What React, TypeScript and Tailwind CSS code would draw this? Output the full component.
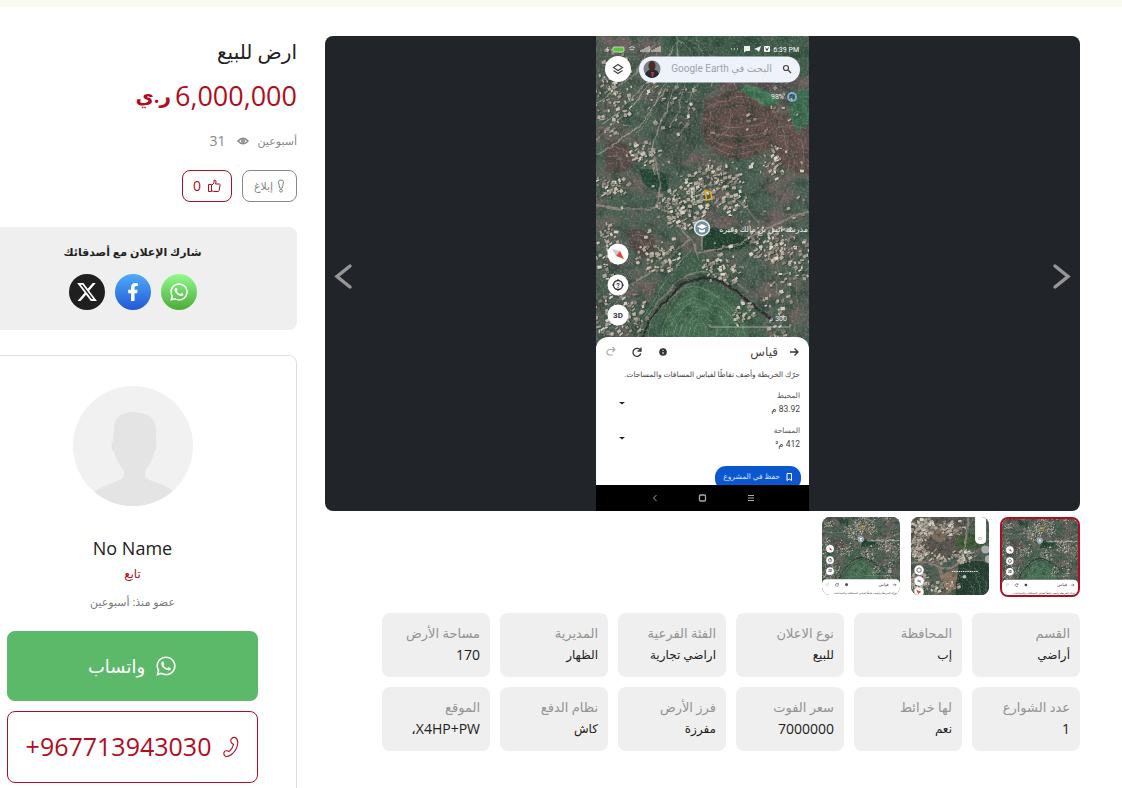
import React, { useId, useState } from 'react';
import { FaFacebookF, FaWhatsapp } from 'react-icons/fa';
import { FaXTwitter } from 'react-icons/fa6';

type Cluster = [x: number, y: number, rx: number, ry: number, count: number];

const VILLAGE: Cluster[] = [
  [16, 55, 19, 46, 100],
  [45, 116, 18, 13, 50],
  [118, 146, 32, 19, 110],
  [84, 172, 26, 22, 130],
  [135, 168, 20, 10, 34],
  [178, 127, 14, 20, 34],
  [172, 208, 24, 18, 85],
  [195, 224, 20, 26, 50],
  [126, 232, 22, 15, 60],
  [10, 214, 13, 28, 55],
  [62, 222, 24, 14, 64],
  [24, 278, 28, 24, 85],
  [145, 278, 14, 14, 30],
  [14, 150, 16, 12, 34],
  [72, 62, 26, 32, 34],
  [190, 60, 20, 30, 12],
  [180, 260, 16, 28, 26],
  [176, 300, 14, 14, 16],
  [106, 150, 106, 80, 90],
];

const TOWN: Cluster[] = [
  [30, 160, 36, 28, 110],
  [110, 160, 36, 26, 60],
  [20, 215, 24, 34, 80],
  [140, 235, 34, 18, 44],
  [70, 240, 34, 18, 24],
  [20, 310, 26, 32, 70],
  [90, 320, 44, 18, 24],
];

const TONES = ['#cbbfae', '#b8aba0', '#ddd3c4', '#8d847d', '#c7b7a6', '#a0938a', '#efe9de'];

const random = (seed: number) => () => {
  seed = (seed * 16807) % 2147483647;
  return seed / 2147483647;
};

const buildHouses = (clusters: Cluster[], seed: number, size: number) => {
  const rnd = random(seed);
  return clusters.flatMap(([cx, cy, rx, ry, count]) =>
    Array.from({ length: count }, () => {
      const a = rnd() * Math.PI * 2;
      const r = Math.pow(rnd(), 0.65);
      return {
        x: cx + Math.cos(a) * r * rx,
        y: cy + Math.sin(a) * r * ry,
        w: size * (0.5 + rnd() * 1.2),
        h: size * (0.4 + rnd() * 0.9),
        turn: -45 + rnd() * 50,
        fill: TONES[Math.floor(rnd() * TONES.length)],
      };
    })
  );
};

const houses = {
  village: buildHouses(VILLAGE, 4211, 2.8),
  town: buildHouses(TOWN, 977, 7),
};

const Terrain: React.FC<{ kind: 'village' | 'town' }> = ({ kind }) => {
  const id = useId();
  return (
    <g>
      <defs>
        <filter id={`${id}soil`} x="0" y="0" width="1" height="1" colorInterpolationFilters="sRGB">
          <feTurbulence type="fractalNoise" baseFrequency="0.03 0.045" numOctaves="5" seed="8" />
          <feColorMatrix values="0 0 0 0 0.42  0 0 0 0 0.37  0 0 0 0 0.36  3 0 0 0 -1.3" />
        </filter>
        <filter id={`${id}grain`} x="0" y="0" width="1" height="1" colorInterpolationFilters="sRGB">
          <feTurbulence type="fractalNoise" baseFrequency="0.45" numOctaves="2" seed="3" />
          <feColorMatrix values="0 0 0 0 0.7  0 0 0 0 0.72  0 0 0 0 0.66  2.4 0 0 0 -1.1" />
        </filter>
        <filter id={`${id}shade`} x="0" y="0" width="1" height="1" colorInterpolationFilters="sRGB">
          <feTurbulence type="fractalNoise" baseFrequency="0.08" numOctaves="4" seed="21" />
          <feColorMatrix values="0 0 0 0 0.1  0 0 0 0 0.19  0 0 0 0 0.15  3 0 0 0 -1.4" />
        </filter>
        <filter id={`${id}rough`} x="-0.1" y="-0.1" width="1.2" height="1.2" colorInterpolationFilters="sRGB">
          <feTurbulence type="fractalNoise" baseFrequency="0.04" numOctaves="3" seed="5" />
          <feDisplacementMap in="SourceGraphic" scale="9" xChannelSelector="R" yChannelSelector="G" />
        </filter>
      </defs>
      <rect width="213" height="475" fill="#485d50" />
      <rect width="213" height="475" filter={`url(#${id}soil)`} />
      {kind === 'village' ? (
        <g filter={`url(#${id}rough)`} fill="none">
          <path d="M70 0C100 -4 150 4 213 0V40C170 50 150 40 120 52C90 66 84 40 60 60Z" fill="#3b5a47" opacity=".8" />
          <path d="M60 60C90 44 110 60 104 100C100 124 84 130 70 120C60 100 58 80 60 60Z" fill="#435247" opacity=".8" />
          <path d="M110 68C125 50 160 52 176 66C188 84 182 116 158 122C130 126 108 112 104 92Z" fill="#5e4b47" />
          <path d="M178 78C196 82 214 76 216 92V140C196 134 186 136 176 112Z" fill="#614e4b" />
          <path d="M8 108C22 98 36 110 38 124C34 138 20 142 10 134Z" fill="#5a4a48" />
          <path d="M30 196C44 186 62 200 60 212C50 222 38 220 32 212Z" fill="#554846" />
          <path d="M120 30C150 20 190 34 206 40L200 56C170 52 150 60 124 48Z" fill="#5c4d51" opacity=".8" />
          <path d="M144 50C160 46 178 56 182 68L168 70C160 64 150 62 144 50Z" fill="#437956" />
          <path d="M190 56L213 50V88L200 94C190 84 196 70 190 56Z" fill="#3b6b50" />
          <path d="M108 196C122 190 150 196 156 206C140 214 120 216 108 212Z" fill="#24422f" />
          <path d="M44 134C60 130 74 140 70 154C56 160 46 150 44 134Z" fill="#264838" />
          <path d="M104 212C90 224 60 240 36 301H170C160 270 140 240 104 212Z" fill="#3d5d48" opacity=".85" />
          <path d="M96 254C130 244 156 290 154 310H70C66 290 76 262 96 254Z" fill="#456c51" opacity=".9" />
          <g stroke="#8a796e" strokeWidth=".9" opacity=".8">
            <path d="M112 72Q136 56 166 66M108 82Q130 100 172 84M110 92Q134 110 178 92M112 100Q140 118 172 106M118 110Q142 122 164 116" />
            <path d="M116 80a10 12 0 1 0 18 4a10 12 0 1 0 -18 -4M122 84a5 6 0 1 0 9 2M126 44q10-10 20 0t-6 14M132 50q6-6 10 2" />
            <path d="M182 92Q200 86 213 94M184 100Q198 96 206 108Q210 120 204 134M176 74Q196 96 192 134M190 110Q200 110 198 140" />
            <path d="M10 112Q26 106 34 126M12 120Q22 116 28 132M34 200Q48 194 56 210M38 206Q46 202 50 212" />
            <path d="M166 214Q190 222 180 250Q176 282 160 296M176 212Q198 226 190 262Q186 284 176 301M190 206Q206 232 200 301M156 222Q176 230 170 256" />
          </g>
          <g stroke="#7d9a84" strokeWidth=".9" opacity=".65">
            <path d="M66 301Q76 258 106 262Q136 270 142 301M76 301Q84 268 106 270Q128 276 132 301M86 301Q92 278 106 279Q120 284 122 301M96 301Q100 288 107 289Q113 293 112 301" />
            <path d="M52 301Q64 254 98 250Q132 254 150 301M42 290Q70 242 96 214M60 280Q80 250 104 244M71 301Q80 263 106 266M81 301Q88 273 106 274.500M91 301Q96 283 106 284" />
          </g>
          <g stroke="#2a4436" strokeWidth="1.200" opacity=".7">
            <path d="M62 70Q96 50 100 90M66 82Q92 64 92 104M70 94Q86 82 84 112M112 76Q140 62 170 76M112 96Q136 114 176 98M150 40Q180 44 200 60" />
          </g>
          <g stroke="#a8a399" opacity=".75">
            <path d="M0 104Q44 72 78 10M0 66Q34 46 60 6M6 90Q40 64 66 22M0 118Q50 92 74 50M80 0Q90 40 66 84Q52 110 60 140" strokeWidth="1.300" />
            <path d="M80 4Q110 20 90 48Q84 74 74 90M90 2Q124 20 100 50Q90 80 84 104M100 4Q130 24 112 50M70 20Q60 60 34 86M76 26Q68 70 40 96" strokeWidth=".8" />
          </g>
          <path
            d="M0 170Q40 178 66 170Q90 194 96 204Q104 214 104 224M96 204Q60 236 34 250Q18 262 10 301M104 216Q150 208 186 186Q204 176 213 176M62 170Q64 140 58 120M132 160Q150 168 164 186"
            stroke="#94867d"
            strokeWidth="1.800"
            opacity=".9"
          />
          <path d="M46 301Q60 276 70 264Q88 240 110 242Q134 246 146 258Q160 276 178 284" stroke="#30262b" strokeWidth="2.400" />
          <path d="M40 301Q56 270 70 258Q88 234 112 237Q138 240 152 256" stroke="#8a7e77" strokeWidth="1.200" />
        </g>
      ) : (
        <g filter={`url(#${id}rough)`} fill="none">
          <path d="M0 131H150V230Q70 250 0 240Z" fill="#5b4e4a" opacity=".7" />
          <path d="M60 150C80 140 100 160 96 190C84 206 62 200 56 186Z" fill="#7c6a5c" />
          <path d="M84 290L124 270L132 320L96 344Z" fill="#8d7461" />
          <path d="M130 262C170 244 213 250 216 270V360H120Z" fill="#233c2f" />
          <path d="M120 184L190 176L196 214L130 222Z" fill="#3d5a35" />
          <g stroke="#58705c" strokeWidth="2">
            <path d="M140 270Q190 280 190 344M156 262Q208 286 206 344M130 290Q168 296 170 344" />
          </g>
          <path d="M0 256Q60 250 80 270Q110 280 140 244L160 131M60 344Q100 330 76 270" stroke="#907e75" strokeWidth="6" />
        </g>
      )}
      <rect width="213" height="475" filter={`url(#${id}shade)`} opacity=".45" />
      {houses[kind].map((b, i) => (
        <g key={i} transform={`translate(${b.x} ${b.y}) rotate(${b.turn})`}>
          <rect x=".7" y=".8" width={b.w} height={b.h} fill="#252b27" opacity=".55" />
          <rect width={b.w} height={b.h} fill={b.fill} opacity=".85" />
        </g>
      ))}
      <rect width="213" height="475" filter={`url(#${id}grain)`} opacity=".35" />
    </g>
  );
};

const MapTools: React.FC = () => (
  <g>
    <path d="M109 154.500l5.500 1.500 1.500 7-5.500 1Z" fill="none" stroke="#e3ae23" strokeWidth="1.500" />
    <circle cx="106" cy="192" r="7.500" fill="#74909c" stroke="#e6edf0" strokeWidth="1.500" />
    <path d="M106 188l-5 2.500 5 2.500 5-2.500ZM103 193v2.500q3 2 6 0V193l-3 1.500Z" fill="#fff" />
    <path d="M106 200v14" stroke="#9aa8a6" />
    <g fill="#fff">
      <circle cx="22" cy="218" r="10.500" />
      <circle cx="22" cy="249" r="10.500" />
      <circle cx="22" cy="279" r="10.500" />
    </g>
    <path d="M16 213l8 2-4 5Z" fill="#c9cccf" />
    <path d="M28 223l-8-3 4-5Z" fill="#e0483a" />
    <circle cx="22" cy="249" r="4.500" fill="none" stroke="#333" strokeWidth="1.300" />
    <path d="M22 243v2M22 253v2M16 249h2M26 249h2" stroke="#333" />
    <g direction="ltr" textAnchor="middle" fontFamily="Roboto, sans-serif" fontWeight="700" fill="#333">
      <text x="22" y="252" fontSize="7">?</text>
      <text x="22" y="282" fontSize="8">3D</text>
    </g>
    <path d="M114 288v3h80v-3" fill="none" stroke="#b8b9b2" strokeWidth=".8" />
  </g>
);

const StatusAndSearch: React.FC = () => (
  <g>
    <text x="203" y="16" fontSize="7" fill="#fff" direction="ltr" textAnchor="end">6:39 PM</text>
    <rect x="168" y="10" width="6" height="6" rx="1" fill="#fff" />
    <path d="M169.500 11.500l1.500 3 1.500-3" fill="none" stroke="#444" />
    <path d="M158 13l7-3-2 6-2-2ZM148 10h6v5h-4l-2 1.500Z" fill="#eee" />
    <path d="M135 13h1M138 13h1M141 13h1" stroke="#fff" />
    <rect x="17" y="11" width="11" height="5" rx="1" fill="#5cc43c" stroke="#ddd" strokeWidth=".8" />
    <path d="M12 11l-1.500 2.500h2L11 16M33 12q3-3 6 0M34 14q2-2 4 0" fill="none" stroke="#eee" strokeWidth=".8" />
    <path d="M45 16v-2M47 16v-3M49 16v-4M51 16v-5M53 16v-6M56 16v-2M58 16v-3M60 16v-4M62 16v-5M64 16v-6" stroke="#eee" />
    <circle cx="22" cy="33" r="13" fill="#fff" />
    <path d="M22 28.500l4.500 3-4.500 3-4.500-3ZM17.500 34.500l4.500 3 4.500-3" fill="none" stroke="#444" strokeWidth="1.200" />
    <rect x="43" y="20.500" width="161" height="26" rx="13" fill="#eef2fa" />
    <circle cx="56" cy="33" r="8.500" fill="#7b8187" />
    <path d="M49 38q3-5 7-4 5-1 7 4-3 4-7 4t-7-4" fill="#252a35" />
    <ellipse cx="56" cy="30" rx="3.500" ry="5" fill="#4a2a24" />
    <path d="M55 36h3l-1 5h-1Z" fill="#b93a38" />
    <text x="176" y="36" fontSize="10" fill="#a0a3a9">البحث في Google Earth</text>
    <circle cx="190" cy="32" r="2.500" fill="none" stroke="#444" strokeWidth="1.200" />
    <path d="M192 34l3 3" stroke="#444" strokeWidth="1.300" />
    <text x="175" y="63" fontSize="7" fill="#eee" direction="ltr">98%</text>
    <circle cx="196" cy="61" r="4" fill="none" stroke="#87abe0" strokeWidth="1.800" />
  </g>
);

const Measurements: React.FC = () => (
  <g>
    <g fill="#555" fontSize="7.500">
      <text x="204" y="362">المحيط</text>
      <text x="204" y="397">المساحة</text>
    </g>
    <g fill="#444" fontSize="8.500">
      <text x="204" y="376">83.92 م</text>
      <text x="204" y="411">412 م²</text>
    </g>
    <path d="M23 366h6l-3 2.500ZM23 401h6l-3 2.500Z" fill="#222" />
    <rect x="119" y="430" width="86" height="24" rx="11" fill="#0b57d0" />
    <text x="184" y="443" fontSize="7.500" fill="#d5e3fc">حفظ في المشروع</text>
    <path d="M191 437.500h4.500v7l-2.200-1.500-2.300 1.500Z" fill="none" stroke="#fff" />
    <rect y="449" width="213" height="26" fill="#000" />
    <g fill="none" stroke="#aaa">
      <path d="M60.500 459l-3 3 3 3M152 459.500h6M152 462h6M152 464.500h6" />
      <rect x="103.500" y="459" width="6" height="6" rx="1" strokeWidth="1.300" />
    </g>
  </g>
);

const PhoneShot: React.FC<{ thumb: boolean }> = ({ thumb }) => (
  <svg viewBox={thumb ? '0 131 213 213' : '0 0 213 475'} className="size-full" role="img" aria-label="صورة الأرض">
    <Terrain kind="village" />
    <MapTools />
    <g direction="rtl" fontFamily="Roboto, 'DejaVu Sans', sans-serif">
      <text x="212" y="196" fontSize="8" fill="#eef0ec">مدرسة انس بن مالك وقيره</text>
      <text x="191" y="285" fontSize="7" fill="#eee">300 م</text>
      <path d="M0 460V313a12 12 0 0 1 12-12h189a12 12 0 0 1 12 12v147Z" fill="#fff" />
      <path d="M194 316h8M198.500 312.500l3.500 3.500-3.500 3.500" fill="none" stroke="#333" strokeWidth="1.300" />
      <circle cx="67" cy="316" r="3.800" fill="#333" />
      <path d="M67 314v1M67 316v2" stroke="#fff" />
      <path d="M44.500 314.500a4 4 0 1 0 .3 3M45 311.500v3.500h-3.500" fill="none" stroke="#333" strokeWidth="1.300" />
      <path d="M17 319h-4q-2.500-1-2-3.500 1-2 3-2h5M16.500 311l2.500 2.500-2.500 2.500" fill="none" stroke="#aaa" strokeWidth="1.100" />
      <text x="182" y="320" fontSize="12" fill="#444">قياس</text>
      <text x="204" y="341" fontSize="7.500" fill="#444">حرّك الخريطة وأضِف نقاطًا لقياس المسافات والمساحات.</text>
      {!thumb && (
        <>
          <StatusAndSearch />
          <Measurements />
        </>
      )}
    </g>
  </svg>
);

const TownShot: React.FC = () => (
  <svg viewBox="0 131 213 213" className="size-full" role="img" aria-label="صورة الأرض">
    <Terrain kind="town" />
    <path d="M175 131h30v62q0 12-14 12t-16-12Z" fill="#fff" />
    <path d="M185 187h8v6h-8Z" fill="none" stroke="#bbb" strokeWidth="2" />
    <circle cx="203" cy="220" r="11" fill="#a8acac" />
    <circle cx="213" cy="246" r="11" fill="#a8acac" />
    <g fill="#fff">
      <circle cx="22" cy="276" r="13" />
      <circle cx="22" cy="306" r="13" />
      <circle cx="22" cy="336" r="13" />
    </g>
    <circle cx="22" cy="276" r="6" fill="none" stroke="#444" strokeWidth="2" />
    <path d="M17 306h10M19 302l7 8" stroke="#555" strokeWidth="2" />
    <path d="M14 330l14 5-8 6Z" fill="#e0483a" />
    <circle cx="146" cy="294" r="4" fill="#9fc3d2" stroke="#fff" />
    <path d="M112 280h70" stroke="#e3e3dd" strokeWidth="3" strokeDasharray="4 2" />
  </svg>
);

const ThumbIcon: React.FC = () => (
  <svg viewBox="0 0 14 14" className="size-3.5" fill="none" stroke="currentColor" strokeLinejoin="round" aria-hidden="true">
    <path d="M1.500 5.500h3v7h-3ZM4.500 6.500 7 4V2q0-1.200 1-1 1.200.3 1 2L8.600 5h3.900q.8.200.6 1l-1 5.500q-.2 1-1.100 1H6.500l-2-1" />
  </svg>
);

const ExclaimIcon: React.FC = () => (
  <svg viewBox="0 0 8 14" className="h-3.5 w-2" fill="none" stroke="currentColor" aria-hidden="true">
    <path d="M4 1Q1.500 1 1.500 3L2.700 9h2.600L6.500 3Q6.500 1 4 1Z" />
    <circle cx="4" cy="11.700" r="1.400" />
  </svg>
);

const EyeIcon: React.FC = () => (
  <svg viewBox="0 0 12 8" className="h-2 w-3" fill="none" stroke="currentColor" strokeWidth="1.600" aria-hidden="true">
    <path d="M1 4Q6-1.600 11 4 6 9.600 1 4Z" />
    <circle cx="6" cy="4" r="1.300" />
  </svg>
);

const PhoneIcon: React.FC = () => (
  <svg viewBox="0 0 16 22" className="h-[22px] w-4" fill="none" stroke="currentColor" strokeWidth="1.100" strokeLinejoin="round" aria-hidden="true">
    <path d="M8 3.500Q9.500 1 12 1.500q3.200 1.500 2.700 6Q14 14 8.500 18.500 5.500 21 2.500 20.300.3 19 1 16.500 1.500 14.500 4 14.800l2 .8Q9.500 13 10.500 8.500L8.600 7Q7.300 5.500 8 3.500Z" />
  </svg>
);

const details = [
  { label: 'القسم', value: 'أراضي' },
  { label: 'المحافظة', value: 'إب' },
  { label: 'نوع الاعلان', value: 'للبيع' },
  { label: 'الفئة الفرعية', value: 'اراضي تجارية' },
  { label: 'المديرية', value: 'الظهار' },
  { label: 'مساحة الأرض', value: '170' },
  { label: 'عدد الشوارع', value: '1' },
  { label: 'لها خرائط', value: 'نعم' },
  { label: 'سعر الفوت', value: '7000000' },
  { label: 'فرز الأرض', value: 'مفرزة' },
  { label: 'نظام الدفع', value: 'كاش' },
  { label: 'الموقع', value: 'X4HP+PW،' },
];

const shots = ['phone', 'town', 'phone'];

const isLatin = (text: string) => /^[0-9A-Z]/.test(text);

const Shot: React.FC<{ kind: string; thumb?: boolean }> = ({ kind, thumb = false }) =>
  kind === 'town' ? <TownShot /> : <PhoneShot thumb={thumb} />;

const App: React.FC = () => {
  const [active, setActive] = useState(0);
  const [likes, setLikes] = useState(0);

  const step = (by: number) => setActive((active + by + shots.length) % shots.length);

  return (
    <div dir="rtl" className="overflow-x-clip bg-white font-['Open_Sans','DejaVu_Sans',sans-serif] text-[#212121]">
      <div className="h-[7px] bg-[#f9faf1]" />
      <div className="flex items-start gap-7 pt-[29px] pr-[42px]">
        <main className="min-w-0 flex-1">
          <div className="relative flex h-[475px] justify-center overflow-hidden rounded-lg bg-[#212529]">
            <div className="h-full w-[213px]">
              <Shot kind={shots[active]} />
            </div>
            <button onClick={() => step(-1)} aria-label="السابق" className="absolute top-56 right-2 text-[#969696]">
              <svg viewBox="0 0 20 32" className="h-8 w-5" fill="none" stroke="currentColor" strokeWidth="3.500" strokeLinecap="round">
                <path d="M3 6l13 10.500L3 27" />
              </svg>
            </button>
            <button onClick={() => step(1)} aria-label="التالي" className="absolute top-56 left-2 text-[#969696]">
              <svg viewBox="0 0 20 32" className="h-8 w-5" fill="none" stroke="currentColor" strokeWidth="3.500" strokeLinecap="round">
                <path d="M17 6L4 16.500 17 27" />
              </svg>
            </button>
          </div>

          <div className="mt-1.5 flex h-20 items-start gap-[11px]">
            {shots.map((kind, i) => (
              <button
                key={i}
                onClick={() => setActive(i)}
                aria-label={`صورة ${i + 1}`}
                className={`overflow-hidden rounded-lg ${i === active ? 'size-20 border-2 border-[#b00d22]' : 'size-[78px]'}`}
              >
                <Shot kind={kind} thumb />
              </button>
            ))}
          </div>

          <dl className="mt-4 flex flex-wrap gap-2.5">
            {details.map((item) => (
              <div key={item.label} className="h-16 w-[108px] rounded-lg bg-[#efefef] px-2.5 pt-[9px] whitespace-nowrap">
                <dt className="text-[13px] leading-[22px] text-[#949494]">{item.label}</dt>
                <dd className={isLatin(item.value) ? 'text-sm leading-[22px]' : 'text-xs leading-[22px]'}>{item.value}</dd>
              </div>
            ))}
          </dl>
        </main>

        <aside className="-ml-8 w-[329px] shrink-0">
          <h1 className="text-xl leading-8">ارض للبيع</h1>
          <p className="mt-2 flex items-center gap-1 text-[#b00d22]">
            <span className="text-[27px] leading-10">6,000,000</span>
            <span className="text-xl leading-10 font-bold">ر.ي</span>
          </p>
          <div className="mt-[15px] flex items-center text-[#888]">
            <span className="text-[11px] leading-5">أسبوعين</span>
            <span className="mr-2 flex items-center gap-3 text-sm leading-5">
              <EyeIcon />
              31
            </span>
          </div>
          <div className="mt-[19px] flex gap-2.5">
            <button className="flex h-8 w-[55px] items-center justify-center gap-1 rounded-lg border border-[#888] text-[11px] text-[#888]">
              <ExclaimIcon />
              إبلاغ
            </button>
            <button
              onClick={() => setLikes(likes + 1)}
              className="flex h-8 w-[50px] items-center justify-center gap-1.5 rounded-lg border border-[#b00d22] text-sm text-[#b00d22]"
            >
              <ThumbIcon />
              {likes}
            </button>
          </div>

          <section className="mt-[25px] h-[103px] rounded-lg bg-[#efefef] pt-[15px] text-center">
            <h2 className="text-[11px] leading-5 font-bold">شارك الإعلان مع أصدقائك</h2>
            <div className="mt-3 flex justify-center gap-2.5 text-white">
              <a href="#whatsapp" aria-label="واتساب" className="flex size-9 items-center justify-center rounded-full bg-linear-to-b from-[#92fb8c] to-[#4bab38]">
                <FaWhatsapp className="size-5" />
              </a>
              <a href="#facebook" aria-label="فيسبوك" className="flex size-9 items-center justify-center rounded-full bg-linear-to-b from-[#52abf8] to-[#2457d5]">
                <FaFacebookF className="size-[18px]" />
              </a>
              <a href="#x" aria-label="إكس" className="flex size-9 items-center justify-center rounded-full bg-[#1f1f1f]">
                <FaXTwitter className="size-[22px]" />
              </a>
            </div>
          </section>

          <section className="mt-[25px] flex flex-col items-center rounded-lg border border-[#dedede] px-[38px] pt-[30px] pb-10">
            <svg viewBox="0 0 120 120" className="size-[120px] rounded-full" role="img" aria-label="No Name">
              <rect width="120" height="120" fill="#f1f1f1" />
              <path
                d="M41 44C40 32 48 26 61 26s22 6 22 18v12c2 2 0 8-2 10-1 7-5 14-9 19v6c5 5 20 6 30 16v13H20v-13c8-7 25-11 31-16v-6c-5-6-8-13-10-19-2-2-4-8-1-11Z"
                fill="#e4e4e4"
              />
            </svg>
            <h3 className="mt-7 text-lg leading-7">No Name</h3>
            <a href="#follow" className="text-xs leading-6 text-[#b00d22]">تابع</a>
            <p className="mt-1 text-[11px] leading-6 text-[#777]">عضو منذ: أسبوعين</p>
            <a href="#whatsapp" className="mt-[17px] flex h-[70px] w-full items-center justify-center gap-2.5 rounded-lg bg-[#5cb96a] text-lg text-white">
              <FaWhatsapp className="size-[22px]" />
              واتساب
            </a>
            <a href="tel:+967713943030" className="mt-2.5 flex h-[72px] w-full items-center justify-center gap-3 rounded-lg border border-[#b00d22] text-[25px] font-medium text-[#b00d22]">
              <PhoneIcon />
              <span dir="ltr">+967713943030</span>
            </a>
          </section>
        </aside>
      </div>
    </div>
  );
};

export default App;
